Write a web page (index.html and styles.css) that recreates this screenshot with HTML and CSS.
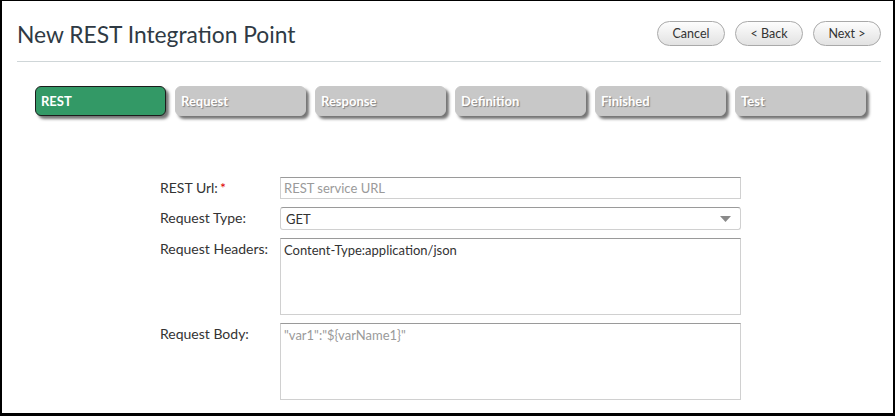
FILE: index.html
```html
<!DOCTYPE html>
<html lang="en">
<head>
    <meta charset="UTF-8">
    <title>New REST Integration Point</title>
    <link rel="stylesheet" href="styles.css">
</head>
<body>
    <div class="frame">
        <div class="page-header">
            <h1>New REST Integration Point</h1>
            <div class="actions">
                <button class="pill-btn">Cancel</button>
                <button class="pill-btn">&lt; Back</button>
                <button class="pill-btn">Next &gt;</button>
            </div>
        </div>

        <ul class="steps">
            <li class="step active">REST</li>
            <li class="step">Request</li>
            <li class="step">Response</li>
            <li class="step">Definition</li>
            <li class="step">Finished</li>
            <li class="step">Test</li>
        </ul>

        <form class="rest-form">
            <label for="restUrl">REST Url:<span class="req">*</span></label>
            <input type="text" id="restUrl" placeholder="REST service URL">

            <label for="requestType">Request Type:</label>
            <div class="select-wrap">
                <select id="requestType">
                    <option>GET</option>
                    <option>POST</option>
                    <option>PUT</option>
                    <option>DELETE</option>
                </select>
                <svg class="caret" width="11" height="6" viewBox="0 0 11 6"><path d="M0 0h11L5.5 6z" fill="#8a8a8a"/></svg>
            </div>

            <label for="requestHeaders">Request Headers:</label>
            <textarea id="requestHeaders">Content-Type:application/json</textarea>

            <label for="requestBody">Request Body:</label>
            <textarea id="requestBody" placeholder='"var1":"${varName1}"'></textarea>
        </form>
    </div>
</body>
</html>
```

FILE: styles.css
```css
:root {
    --text-color: #333;
    --tab-grey: #c8c8c8;
    --tab-green: #339966;
}

html, body {
    margin: 0;
    padding: 0;
    background: #fff;
}

body {
    font-family: Lato, 'Open Sans', sans-serif;
    color: var(--text-color);
}

.frame {
    box-sizing: border-box;
    width: 895px;
    height: 416px;
    border-style: solid;
    border-color: #000;
    border-width: 1px 2px 3px 2px;
    padding: 0 12px 0 15px;
    overflow: hidden;
}

.page-header {
    display: flex;
    justify-content: space-between;
    align-items: center;
    padding: 19px 0 15px 0;
    border-bottom: 1px solid #cfd6d8;
}

.page-header h1 {
    margin: 0;
    padding-top: 2px;
    font-size: 22.8px;
    font-weight: normal;
    line-height: 24px;
    color: #2f3a44;
}

.actions {
    display: flex;
    gap: 10px;
}

.pill-btn {
    width: 68px;
    height: 25px;
    border: 1px solid #a9a9a9;
    border-radius: 13px;
    background: linear-gradient(#fdfdfd, #e2e2e2);
    font-family: inherit;
    font-size: 12.5px;
    color: #333;
    cursor: pointer;
}

.steps {
    display: flex;
    gap: 9px;
    list-style: none;
    margin: 24px 0 0 18px;
    padding: 0;
}

.step {
    box-sizing: border-box;
    width: 131px;
    height: 30px;
    padding: 0 5px;
    line-height: 29px;
    font-size: 13px;
    font-weight: bold;
    color: #fff;
    background: var(--tab-grey);
    border: 1px solid var(--tab-grey);
    border-radius: 6px;
    box-shadow: 3px 3px 3px rgba(0, 0, 0, 0.55);
    text-shadow: 1px 1px 1px rgba(0, 0, 0, 0.35);
}

.step.active {
    background: var(--tab-green);
    border-color: #1c1c1c;
    text-shadow: none;
}

.rest-form {
    display: grid;
    grid-template-columns: 120px 461px;
    row-gap: 8px;
    margin: 61px 0 0 143px;
}

.rest-form label {
    font-size: 14px;
    line-height: 16px;
    padding-top: 3px;
    color: #333;
}

.req {
    color: #d00;
    margin-left: 2px;
}

.rest-form input,
.rest-form select,
.rest-form textarea {
    box-sizing: border-box;
    width: 100%;
    margin: 0;
    font-family: inherit;
    font-size: 13px;
    color: #333;
    background: #fff;
    border: 1px solid #d0d0d0;
    border-top-color: #9a9a9a;
    outline: none;
}

.rest-form input {
    height: 22px;
    padding: 0 3px;
}

.rest-form input::placeholder,
.rest-form textarea::placeholder {
    color: #9a9a9a;
}

.select-wrap {
    position: relative;
}

.rest-form select {
    height: 23px;
    padding: 0 5px;
    border-radius: 3px;
    -webkit-appearance: none;
    appearance: none;
}

.caret {
    position: absolute;
    right: 10px;
    top: 9px;
}

.rest-form textarea {
    height: 77px;
    padding: 3px 3px;
    resize: none;
}
```
